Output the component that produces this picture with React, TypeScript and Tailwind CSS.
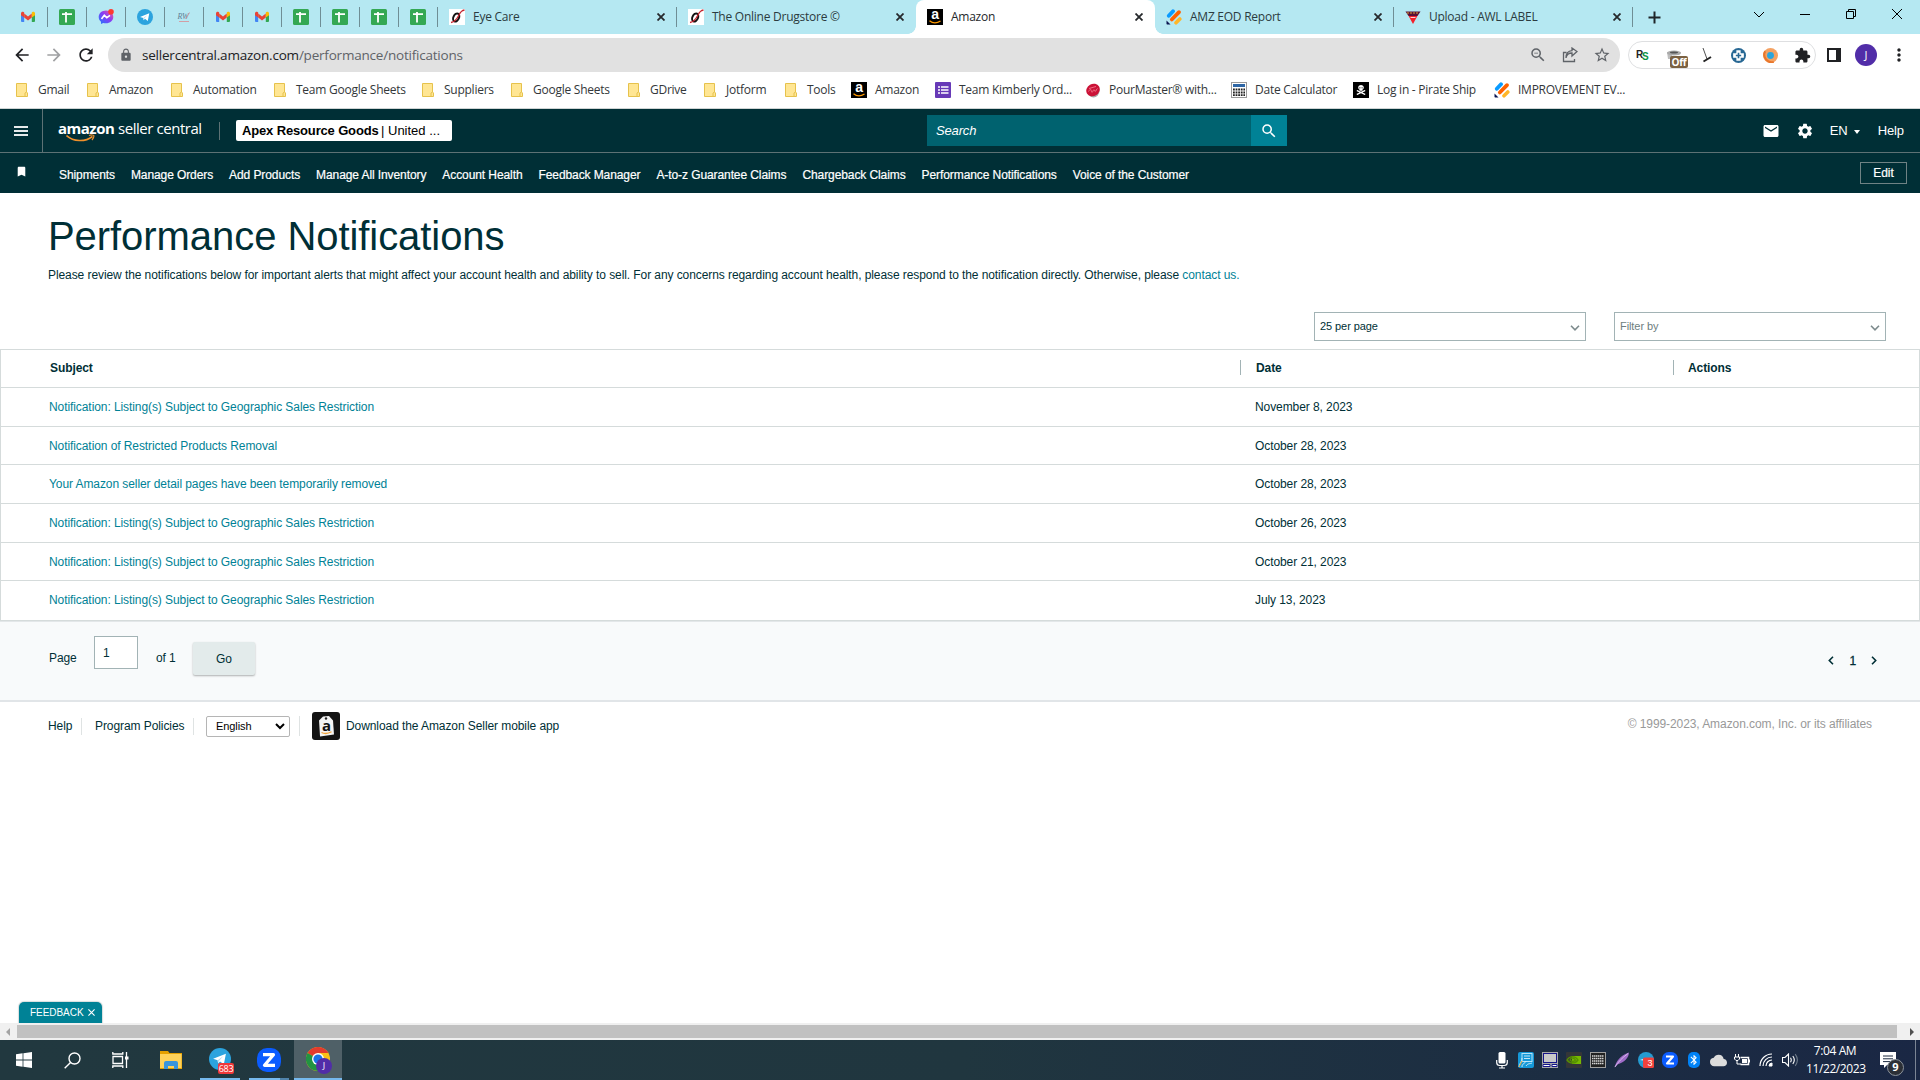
import type { ReactNode } from "react";
import { FaSkullCrossbones } from "react-icons/fa";
import {
  MdArrowBack,
  MdArrowForward,
  MdBluetooth,
  MdBookmark,
  MdCloud,
  MdEmail,
  MdExtension,
  MdLock,
  MdMoreVert,
  MdRefresh,
  MdSearch,
  MdSettings,
  MdStarBorder,
  MdZoomOut,
} from "react-icons/md";

const GmailIcon = () => (
  <svg width="16" height="16" viewBox="0 0 16 16">
    <path d="M1 4.5V12a1 1 0 0 0 1 1h2.2V6.6z" fill="#4285f4" />
    <path d="M15 4.5V12a1 1 0 0 1-1 1h-2.2V6.6z" fill="#34a853" />
    <path d="M4.2 4.6 8 7.5l3.8-2.9v4L8 11.4 4.2 8.6z" fill="#ea4335" />
    <path d="M1 4.4C1 2.8 2.6 2.4 3.6 3.1l.6.5v5L1 6.2z" fill="#ea4335" />
    <path d="M15 4.4c0-1.6-1.6-2-2.6-1.3l-.6.5v5L15 6.2z" fill="#fbbc04" />
  </svg>
);

const SheetsIcon = () => (
  <svg width="16" height="16" viewBox="0 0 16 16">
    <rect width="16" height="16" rx="1.5" fill="#34a853" />
    <path d="M3 5.2h10M7 3v10.5" stroke="#fff" strokeWidth="1.8" fill="none" />
  </svg>
);

const MessengerIcon = () => (
  <svg width="16" height="16" viewBox="0 0 16 16">
    <defs>
      <linearGradient id="msg" x1="0" y1="1" x2="1" y2="0">
        <stop offset="0" stopColor="#1a7bff" />
        <stop offset="0.55" stopColor="#8a3cf5" />
        <stop offset="1" stopColor="#ff5f8a" />
      </linearGradient>
    </defs>
    <path d="M8 1.5C4 1.5.7 4.3.7 8c0 2 .9 3.6 2.3 4.8V15l2.2-1.1c.9.2 1.8.4 2.8.4 4 0 7.3-2.7 7.3-6.3S12 1.5 8 1.5z" fill="url(#msg)" />
    <path d="M3.5 10 6.3 6.3 8.8 8.6 12 6.3" stroke="#fff" strokeWidth="1.6" fill="none" />
    <circle cx="13" cy="2.8" r="2.8" fill="#ff3b30" />
  </svg>
);

const TelegramIcon = ({ size = 16 }: { size?: number }) => (
  <svg width={size} height={size} viewBox="0 0 16 16">
    <circle cx="8" cy="8" r="8" fill="#2ca3de" />
    <path d="M3 7.9 12.3 4.2 10.8 11.9 8 9.8 6.6 11.2 6.3 8.900z" fill="#fff" />
    <path d="M6.3 8.9 10.5 5.9 7.2 9.4 6.6 11.2z" fill="#b5d9ee" />
  </svg>
);

const RwIcon = () => (
  <svg width="16" height="16" viewBox="0 0 16 16">
    <text x="1.5" y="10" fontSize="8" fontStyle="italic" fontFamily="Liberation Serif" fill="#5f7f96">RW</text>
    <path d="M9.500 10 13.500 3.500M3 12.500h10" stroke="#d98a90" strokeWidth=".8" />
  </svg>
);

const DrugstoreIcon = () => (
  <svg width="16" height="16" viewBox="0 0 16 16">
    <rect width="16" height="16" fill="#fff" />
    <ellipse cx="7.2" cy="8.5" rx="2.800" ry="4.200" transform="rotate(25 7.2 8.5)" stroke="#111" strokeWidth="2" fill="none" />
    <path d="M2 13.5C5 13 8 10 10 6s3-4.500 5.5-5" stroke="#c4252f" strokeWidth="1.3" fill="none" />
  </svg>
);

const AmazonIcon = () => (
  <svg className="overflow-visible" width="16" height="16" viewBox="0 0 16 16">
    <rect width="16" height="16" fill="#000" />
    <text x="8" y="10.3" fontSize="14" fontWeight="bold" fontFamily="Liberation Sans" textAnchor="middle" fill="#fff">a</text>
    <path d="M2.5 11.8c3 2.4 7.5 2.5 11 .2" stroke="#f90" strokeWidth="1.3" fill="none" />
  </svg>
);

const JotformIcon = () => (
  <svg width="16" height="16" viewBox="0 0 16 16" strokeLinecap="round">
    <path d="M2.8 6.8 7 2.2" stroke="#0a9bff" strokeWidth="3.8" />
    <path d="M5.8 10.5 13 3.2" stroke="#ff6100" strokeWidth="3.8" />
    <path d="M10 13.8 13.8 10" stroke="#ffb629" strokeWidth="3.6" />
    <path d="M.5 11.5v3.3q0 .7.7.7h3.3z" fill="#0a1551" />
  </svg>
);

const UploadIcon = () => (
  <svg width="16" height="16" viewBox="0 0 16 16">
    <path d="M.5 2.5h15L12.500 7h-9z" fill="#5a1038" />
    <path d="M2 4h12" stroke="#d8a530" strokeWidth="1" strokeDasharray="2 1" />
    <path d="M3.6 7h8.8L8 15z" fill="#f3202a" />
    <path d="M5.5 8.5h5" stroke="#fff" strokeWidth=".8" />
  </svg>
);

const FolderIcon = () => (
  <svg width="12" height="16" viewBox="0 0 12 16">
    <path d="M.5 1.5h10V10l1 1v3.5H.5z" fill="#ffe694" stroke="#e6c24c" />
    <path d="M9 14.5V11l1.5-1" fill="none" stroke="#e6c24c" />
  </svg>
);

const FormsIcon = () => (
  <svg width="16" height="16" viewBox="0 0 16 16">
    <rect width="16" height="16" rx="1" fill="#673ab7" />
    <path d="M3 5h2M3 8h2M3 11h2M6 5h7.5M6 8h7.5M6 11h7.5" stroke="#fff" strokeWidth="1.5" />
  </svg>
);

const PourIcon = () => (
  <svg width="16" height="16" viewBox="0 0 16 16">
    <ellipse cx="8.500" cy="9" rx="6" ry="6.500" fill="#a8a8a8" />
    <ellipse cx="8" cy="8" rx="7" ry="6" transform="rotate(-30 8 8)" fill="#cb1237" />
    <path d="M3.5 9.5c2-3 2-3 3 0s2-4 3-1 2-2 3-2M4 6.5l7-2" stroke="#f0788c" strokeWidth=".9" fill="none" />
  </svg>
);

const DateCalcIcon = () => (
  <svg width="16" height="16" viewBox="0 0 16 16">
    <rect x=".5" y=".5" width="15" height="15" fill="#fff" stroke="#9a9a9a" />
    <path d="M2 3.5h12" stroke="#2e66a5" strokeWidth="3" />
    <path d="M2 7.5h12M2 10.5h12M2 13.2h12" stroke="#222" strokeWidth="1.8" strokeDasharray="1.8 .8" />
  </svg>
);

const PirateIcon = () => (
  <div className="flex size-4 items-center justify-center bg-black">
    <FaSkullCrossbones size={10} color="#fff" />
  </div>
);

const pinned = [
  <GmailIcon />, <SheetsIcon />, <MessengerIcon />, <TelegramIcon />, <RwIcon />, <GmailIcon />,
  <GmailIcon />, <SheetsIcon />, <SheetsIcon />, <SheetsIcon />, <SheetsIcon />,
];

const tabs = [
  { icon: <DrugstoreIcon />, title: "Eye Care", line: true },
  { icon: <DrugstoreIcon />, title: "The Online Drugstore ©" },
  { icon: <AmazonIcon />, title: "Amazon", active: true },
  { icon: <JotformIcon />, title: "AMZ EOD Report", line: true },
  { icon: <UploadIcon />, title: "Upload - AWL LABEL", line: true },
];

const bookmarks = [
  { title: "Gmail", width: 71 },
  { title: "Amazon", width: 84 },
  { title: "Automation", width: 103 },
  { title: "Team Google Sheets", width: 148 },
  { title: "Suppliers", width: 89 },
  { title: "Google Sheets", width: 117 },
  { title: "GDrive", width: 76 },
  { title: "Jotform", width: 81 },
  { title: "Tools", width: 66 },
  { title: "Amazon", width: 84, icon: <AmazonIcon /> },
  { title: "Team Kimberly Ord...", width: 150, icon: <FormsIcon /> },
  { title: "PourMaster® with...", width: 146, icon: <PourIcon /> },
  { title: "Date Calculator", width: 122, icon: <DateCalcIcon /> },
  { title: "Log in - Pirate Ship", width: 141, icon: <PirateIcon /> },
  { title: "IMPROVEMENT EV...", width: 140, icon: <JotformIcon /> },
];

const navLinks = [
  "Shipments", "Manage Orders", "Add Products", "Manage All Inventory", "Account Health", "Feedback Manager",
  "A-to-z Guarantee Claims", "Chargeback Claims", "Performance Notifications", "Voice of the Customer",
];

const rows = [
  { subject: "Notification: Listing(s) Subject to Geographic Sales Restriction", date: "November 8, 2023" },
  { subject: "Notification of Restricted Products Removal", date: "October 28, 2023" },
  { subject: "Your Amazon seller detail pages have been temporarily removed", date: "October 28, 2023" },
  { subject: "Notification: Listing(s) Subject to Geographic Sales Restriction", date: "October 26, 2023" },
  { subject: "Notification: Listing(s) Subject to Geographic Sales Restriction", date: "October 21, 2023" },
  { subject: "Notification: Listing(s) Subject to Geographic Sales Restriction", date: "July 13, 2023" },
];

const Cross = ({ size = 8, width = 1.8 }: { size?: number; width?: number }) => (
  <svg width={size} height={size} viewBox="0 0 8 8" stroke="currentColor" strokeWidth={width}>
    <path d="M.5.5l7 7M7.5.5l-7 7" />
  </svg>
);

const TabBar = () => (
  <div className="flex h-[34px] bg-[#b5e8f2] pl-[9px] text-[12px] tracking-[-0.25px] text-[#2b3b40]">
    {pinned.map((icon, i) => (
      <div key={i} className="flex w-[39px] items-center">
        <div className="flex w-[38px] justify-center">{icon}</div>
        <div className="h-5 w-px bg-[#6f8e95]" />
      </div>
    ))}
    {tabs.map((tab) => (
      <div
        key={tab.title}
        className={tab.active ? "relative flex w-[239px] items-center rounded-t-lg bg-white text-[#26292c]" : "flex w-[239px] items-center"}
      >
        {tab.active && (
          <>
            <div className="absolute bottom-0 -left-2 size-2 bg-[radial-gradient(circle_at_0_0,#b5e8f2_7.5px,#fff_8px)]" />
            <div className="absolute -right-2 bottom-0 size-2 bg-[radial-gradient(circle_at_100%_0,#b5e8f2_7.5px,#fff_8px)]" />
          </>
        )}
        <div className="ml-[11px] flex w-6">{tab.icon}</div>
        <span className="flex-1 whitespace-nowrap">{tab.title}</span>
        <div className="mr-[11px] text-[#26292c]">
          <Cross />
        </div>
        <div className={tab.line ? "h-5 w-px bg-[#6f8e95]" : "h-5 w-px"} />
      </div>
    ))}
    <svg className="mt-[11px] ml-[15px]" width="13" height="13" viewBox="0 0 13 13" stroke="#1f2528" strokeWidth="2">
      <path d="M6.5.5v12M.5 6.5h12" />
    </svg>
    <svg className="mt-2 ml-[92px]" width="150" height="12" viewBox="0 0 150 12" stroke="#000" fill="none">
      <path d="M1 4l5 5 5-5" />
      <path d="M47 6.5h10" />
      <path d="M93.5 3.5h7v7h-7zM95.5 3.500v-2h7v7h-2" />
      <path d="M139 1l10 10M149 1l-10 10" />
    </svg>
  </div>
);

const Toolbar = () => (
  <div className="flex h-[42px] items-center text-[#202124]">
    <div className="flex w-[108px] items-center gap-3 pl-[12px]">
      <MdArrowBack size={20} />
      <MdArrowForward size={20} color="#a0a1a3" />
      <MdRefresh size={20} />
    </div>
    <div className="flex h-[34px] w-[1512px] items-center rounded-full bg-[#e1e1e1] text-[#5f6368]">
      <MdLock size={14} className="ml-[11px]" />
      <div className="ml-[9px] flex-1 text-[13.5px] tracking-[-0.21px]">
        <span className="text-[#202124]">sellercentral.amazon.com</span>/performance/notifications
      </div>
      <MdZoomOut size={18} />
      <svg className="ml-[15px]" width="16" height="16" viewBox="0 0 16 16" stroke="#5f6368" strokeWidth="1.3" fill="none">
        <path d="M4.5 5.5H1.500v9h11V12M4 11c.6-3.5 3-5 6-5V9l5-4.500L10 1v2.7C6 4 4 7 4 11z" />
      </svg>
      <MdStarBorder size={18} className="mr-[9px] ml-[15px]" />
    </div>
    <div className="ml-2 flex h-7 w-[188px] items-center rounded-full border border-[#dedfe1]">
      <svg className="ml-[7px]" width="14" height="16" viewBox="0 0 14 16" fontFamily="Liberation Sans" fontWeight="bold">
        <text x="0" y="11" fontSize="10" fill="#222">R</text>
        <text x="6" y="13" fontSize="10" fill="#0a9345">S</text>
      </svg>
      <div className="relative ml-4 size-4">
        <svg width="16" height="16" viewBox="0 0 16 16">
          <path d="M1 5h14l-2 3H6v4H2z" fill="#bdbdbd" />
          <ellipse cx="8" cy="6" rx="7" ry="2.5" fill="#aaa" />
          <ellipse cx="8" cy="5.500" rx="4" ry="1" fill="#555" />
        </svg>
        <div className="absolute top-[9px] left-1 h-3 w-[18px] rounded-[2px] bg-[#7b6142] text-center text-[10px] leading-[12px] font-bold tracking-[-0.3px] text-white">Off</div>
      </div>
      <svg className="ml-[18px]" width="14" height="16" viewBox="0 0 14 16" stroke="#222" fill="none">
        <path d="M3 1 7 12" strokeWidth=".8" />
        <path d="M3.500 14.5 11 10" strokeWidth="2" />
      </svg>
      <svg className="ml-[17px]" width="15" height="15" viewBox="0 0 14 14">
        <circle cx="7" cy="7" r="7" fill="#286894" />
        <path d="M7 2v10M2 7h10" stroke="#fff" strokeWidth="4" />
        <path d="M7 4.5v5M4.5 7h5" stroke="#286894" strokeWidth="1.500" />
      </svg>
      <svg className="ml-[17px]" width="15" height="15" viewBox="0 0 14 14">
        <circle cx="7" cy="7" r="7" fill="#f4a263" />
        <path d="M2 3a7 7 0 0 0 8 10" stroke="#e9772c" strokeWidth="2" fill="none" />
        <circle cx="7" cy="7" r="3.2" fill="#2ba5dd" />
      </svg>
      <MdExtension size={17} className="ml-4" />
    </div>
    <svg className="ml-[11px]" width="14" height="14" viewBox="0 0 14 14">
      <path d="M1 1h12v12H1z" fill="#fff" stroke="#202124" strokeWidth="2" />
      <path d="M9 0h5v14H9z" fill="#202124" />
    </svg>
    <div className="ml-[14px] flex size-[22px] items-center justify-center rounded-full bg-[#512da8] text-[11px] text-white">J</div>
    <MdMoreVert size={20} className="ml-3" />
  </div>
);

const Bookmarks = () => (
  <div className="flex h-[33px] items-center border-b border-[#cfd4d4] pb-1 pl-4 text-[12px] tracking-[-0.25px] text-[#33373a]">
    {bookmarks.map((b, i) => (
      <div key={i} className="flex items-center whitespace-nowrap" style={{ width: b.width }}>
        <div className={b.icon ? "w-6 shrink-0" : "w-[22px] shrink-0"}>{b.icon ?? <FolderIcon />}</div>
        {b.title}
      </div>
    ))}
  </div>
);

const Header = () => (
  <div className="bg-[#002f36] font-['Liberation_Sans',sans-serif] text-white">
    <div className="flex h-[44px] border-b border-[#5d7275]">
      <div className="flex w-[43px] items-center border-r border-[#5d7275] pl-[14px]">
        <svg width="14" height="10" viewBox="0 0 14 10" stroke="#e6eaeb" strokeWidth="1.8">
          <path d="M0 1h14M0 5h14M0 9h14" />
        </svg>
      </div>
      <div className="relative ml-[15px] flex h-[38px] w-[161px] items-center font-['Open_Sans',sans-serif] text-[15px] whitespace-nowrap">
        <span className="w-[60px] font-bold tracking-[-0.5px]">amazon</span>
        <span className="tracking-[-0.45px]">seller central</span>
        <svg className="absolute top-[25px] left-2" width="30" height="9" viewBox="0 0 30 9" stroke="#f0902b" fill="none">
          <path d="M.5 1.5c7 6 18 7 26 1" strokeWidth="1.6" />
          <path d="M23 1.5c2-.8 5-.7 5 .3s-1 3-2 4.2" strokeWidth="1.2" />
        </svg>
      </div>
      <div className="mt-[13px] h-[18px] w-px bg-[#5d7275]" />
      <div className="mt-[11px] ml-4 flex h-[21px] w-[216px] items-center rounded-[2px] bg-white pl-1.5 text-[13px] text-black">
        <span className="w-[139px] font-bold tracking-[-0.15px] whitespace-nowrap">Apex Resource Goods</span>| United ...
      </div>
      <div className="mt-1.5 ml-[475px] flex h-[31px] w-[360px]">
        <div className="flex w-[324px] items-center bg-[#00626f] pl-[9px] text-[13px] tracking-[-0.15px] italic">Search</div>
        <div className="flex w-9 items-center justify-center bg-[#008296]">
          <MdSearch size={18} />
        </div>
      </div>
      <div className="ml-auto flex items-center pr-4 text-[13px] tracking-[-0.1px]">
        <MdEmail size={18} />
        <MdSettings size={18} className="ml-4" />
        <span className="ml-4">EN</span>
        <span className="mt-0.5 ml-1.5 border-x-[3.5px] border-t-4 border-x-transparent border-t-white" />
        <span className="ml-[18px]">Help</span>
      </div>
    </div>
    <div className="flex h-[40px] items-center text-[12px]">
      <MdBookmark size={13} className="mb-1 ml-[15px] w-[13px]" />
      <div className="mt-[3px] ml-[31px] flex gap-4 tracking-[-0.09px] [-webkit-text-stroke:0.2px_white]">
        {navLinks.map((link) => (
          <span key={link} className="whitespace-nowrap">{link}</span>
        ))}
      </div>
      <div className="mr-[13px] ml-auto flex h-[22px] w-[47px] items-center justify-center border border-[#6f8284] [-webkit-text-stroke:0.2px_white]">Edit</div>
    </div>
  </div>
);

const Select = ({ children, className }: { children: ReactNode; className: string }) => (
  <div className={`flex h-[29px] w-[272px] items-center justify-between border border-[#a2b3b5] bg-white pr-[5px] pl-[5px] text-[11px] tracking-[-0.08px] ${className}`}>
    {children}
    <svg className="mt-0.5" width="10" height="6" viewBox="0 0 10 6" stroke="#7d8b8d" strokeWidth="1.6" fill="none">
      <path d="M1 .8l4 4 4-4" />
    </svg>
  </div>
);

const Content = () => (
  <div className="flex h-[830px] flex-col font-['Liberation_Sans',sans-serif] text-[12px] tracking-[-0.08px] text-[#002f36]">
    <div className="h-[119px] pl-12">
      <h1 className="pt-[20px] text-[40px] leading-[46px] tracking-[-0.06px]">Performance Notifications</h1>
      <p className="mt-2 leading-4">
        Please review the notifications below for important alerts that might affect your account health and ability to
        sell. For any concerns regarding account health, please respond to the notification directly. Otherwise, please{" "}
        <span className="text-[#008296]">contact us.</span>
      </p>
    </div>
    <div className="flex h-[37px] justify-end gap-7 pr-[34px]">
      <Select className="text-[#002f36]">25 per page</Select>
      <Select className="text-[#6d7e80]">Filter by</Select>
    </div>
    <div className="border border-[#d5dbdb]">
      <div className="flex h-[38px] items-center border-b border-[#d5dbdb] pb-0.5 pl-[49px] font-bold">
        <span className="w-[1190px]">Subject</span>
        <span className="h-[15px] w-4 border-l border-[#a2b3b5]" />
        <span className="w-[417px]">Date</span>
        <span className="h-[15px] w-[15px] border-l border-[#a2b3b5]" />
        <span>Actions</span>
      </div>
      {rows.map((row, i) => (
        <div key={i} className="flex h-[38.7px] items-center border-b border-[#d5dbdb] pl-12 last:border-b-0 last:pb-0.5">
          <span className="w-[1206px] text-[#008296]">{row.subject}</span>
          <span>{row.date}</span>
        </div>
      ))}
    </div>
    <div className="flex h-[81px] justify-between border-t border-b-2 border-t-[#e3e7e9] border-b-[#e1e5e8] bg-[#f8fafb]">
      <div className="flex pl-[49px]">
        <span className="mt-[27px] w-[45px]">Page</span>
        <div className="mt-[14px] flex h-[33px] w-11 items-center border border-[#a2b3b5] bg-white pl-2">1</div>
        <span className="mt-[27px] ml-[18px] w-9">of 1</span>
        <div className="mt-[20px] ml-px flex h-[33px] w-[62px] items-center justify-center rounded-[2px] bg-[#e3ebeb] shadow-[0_1px_2px_rgba(0,0,0,0.3)]">Go</div>
      </div>
      <div className="flex h-[77px] items-center gap-[15px] pr-[43px] text-[12px]">
        <svg width="6" height="9" viewBox="0 0 6 9" stroke="#002f36" strokeWidth="1.6" fill="none">
          <path d="M5 .8 1.3 4.5 5 8.2" />
        </svg>
        <span className="[-webkit-text-stroke:0.3px_#002f36]">1</span>
        <svg width="6" height="9" viewBox="0 0 6 9" stroke="#002f36" strokeWidth="1.6" fill="none">
          <path d="M1 .8 4.7 4.5 1 8.2" />
        </svg>
      </div>
    </div>
    <div className="flex h-[48px] items-center pl-12">
      <span className="w-[33px]">Help</span>
      <span className="h-[17px] w-[14px] border-l border-[#dfe3e3]" />
      <span className="w-[98px]">Program Policies</span>
      <span className="h-[17px] w-[13px] border-l border-[#dfe3e3]" />
      <div className="flex h-[21px] w-[84px] items-center justify-between rounded-[2px] border border-[#b5b5b5] pr-1 pl-[9px] text-[11px] text-black">
        English
        <svg width="10" height="7" viewBox="0 0 10 7" stroke="#000" strokeWidth="2" fill="none">
          <path d="M1 1l4 4 4-4" />
        </svg>
      </div>
      <span className="ml-[9px] h-[20px] w-[13px] border-l border-[#dfe3e3]" />
      <svg width="28" height="28" viewBox="0 0 28 28">
        <rect width="28" height="28" rx="3" fill="#131313" />
        <path d="M11 4.5 17 4l4 4.5 1 14L8 24.5 7 8.500z" fill="#f4f4f4" />
        <circle cx="14" cy="6.5" r="1.2" fill="#222" />
        <text x="14.5" y="19" fontSize="15" fontWeight="bold" textAnchor="middle" fontFamily="Open Sans" fill="#111">a</text>
        <path d="M9.5 20.5c3 1.5 7 1 10-.7" stroke="#f2a33a" strokeWidth="1.3" fill="none" />
      </svg>
      <span className="ml-1.5">Download the Amazon Seller mobile app</span>
      <span className="mb-1 mr-12 ml-auto text-[#999]">© 1999-2023, Amazon.com, Inc. or its affiliates</span>
    </div>
    <div className="mt-auto ml-[19px] flex h-[21px] w-[83px] items-center rounded-t-[5px] bg-[#008296] pl-[11px] text-[10px] text-white shadow-[0_0_1px_1px_#d8dede]">
      <span className="w-[58px] tracking-[-0.05px]">FEEDBACK</span>
      <Cross size={7} width={1.3} />
    </div>
  </div>
);

const ScrollBar = () => (
  <div className="z-10 flex h-[17px] items-center bg-[#f0f0f0]">
    <div className="flex w-[17px] pl-1.5">
      <div className="border-y-4 border-r-4 border-y-transparent border-r-[#a3a3a3]" />
    </div>
    <div className="h-[13px] w-[1880px] bg-[#c1c1c1]" />
    <div className="ml-auto mr-1.5 border-y-4 border-l-4 border-y-transparent border-l-[#505050]" />
  </div>
);

const ZoomIcon = ({ size }: { size: number }) => (
  <svg width={size} height={size} viewBox="0 0 24 24">
    <rect width="24" height="24" rx="10" fill="#0b5cff" />
    <path d="M6 6.7h10.500L7.5 17.3H18" stroke="#fff" strokeWidth="3.200" fill="none" strokeLinejoin="round" />
  </svg>
);

const trayIcons = [
  <svg width="12" height="17" viewBox="0 0 12 17">
    <rect x="2.500" width="7" height="11.5" rx="1.5" fill="#fff" />
    <path d="M.7 8v2.5q0 3 3 3h4.6q3 0 3-3V8M6 13.5V16M3 16h6" stroke="#fff" strokeWidth="1.2" fill="none" />
  </svg>,
  <svg width="16" height="16" viewBox="0 0 16 16">
    <rect width="16" height="16" rx="2" fill="#1598d8" />
    <rect x="4" y="1.5" width="10" height="8" fill="none" stroke="#b8e2f5" />
    <path d="M6 4h6M6 6.5h6M1 15c1-5 3-5 3-9M4 15c0-4 3-3 4-6M8 14c2-3 4-2 6-3" stroke="#d7eef8" strokeWidth=".9" fill="none" />
    <path d="M1 15l3-6" stroke="#e2a33c" />
  </svg>,
  <svg width="16" height="16" viewBox="0 0 16 16">
    <rect width="16" height="16" fill="#a9a9a9" />
    <rect x="1.5" y="1.5" width="13" height="9" fill="#c9c9c9" stroke="#16168a" />
    <path d="M1 12.5h7v2H1zM10 12.5h5v2h-5z" fill="#fff" stroke="#16168a" />
  </svg>,
  <svg width="16" height="16" viewBox="0 0 16 16">
    <rect width="16" height="16" rx="1" fill="#343638" />
    <path d="M6 4h9v8H6z" fill="#76b900" />
    <path d="M1 8c3-4.5 8-4.5 11 0-3 4-8 4-11 0zM4 8c1-2.5 4-2.5 5.5 0C8 10 5.5 10 4 8z" stroke="#579000" strokeWidth="1.3" fill="none" />
  </svg>,
  <svg width="16" height="16" viewBox="0 0 16 16">
    <rect x=".5" y=".5" width="15" height="15" fill="#222" stroke="#a0a0a0" />
    <path d="M2 4h12M2 6.5h12M2 9h12M2 11.5h12" stroke="#d5d5d5" strokeWidth="1.4" strokeDasharray="1.5 .5" />
  </svg>,
  <svg width="16" height="16" viewBox="0 0 16 16">
    <path d="M.5 15.5C2 10 6 3 15 .5c0 5-5 10-11.5 12z" fill="#a06cc9" />
    <path d="M1 15C4 10 8 6 14 1.5" stroke="#e4cdf2" strokeWidth=".8" fill="none" />
  </svg>,
  <svg width="16" height="16" viewBox="0 0 16 16">
    <circle cx="8" cy="8" r="8" fill="#259bd1" />
    <path d="M2 8l7-2v3z" fill="#fff" />
    <rect x="5" y="5.5" width="11" height="10.5" rx="1.5" fill="#f0413c" />
    <text x="12" y="14" fontSize="9" textAnchor="middle" fill="#fff" fontFamily="Liberation Sans">3</text>
  </svg>,
  <ZoomIcon size={16} />,
  <div className="flex h-4 w-3 items-center justify-center rounded-[5px] bg-[#0082f6] text-white">
    <MdBluetooth size={14} />
  </div>,
  <MdCloud size={17} color="#dcdcdc" />,
  <svg width="16" height="12" viewBox="0 0 16 12" stroke="#fff" fill="none">
    <path d="M6.5 3.5h8v7h-8M15.5 5.5v3" strokeWidth="1.5" />
    <path d="M8 5h5v4H8z" fill="#fff" stroke="none" />
    <path d="M1.5 0v3M4.5 0v3M.5 3h5v2L4 6.5H2L.5 5zM3 6.5V10h4" />
  </svg>,
  <svg width="14" height="14" viewBox="0 0 14 14" stroke="#fff" fill="none">
    <path d="M1 13A12 12 0 0 1 13 1M4 13a9 9 0 0 1 9-9M7 13a6 6 0 0 1 6-6" strokeWidth="1.2" />
    <path d="M10 13a3 3 0 0 1 3-3v3z" fill="#fff" />
  </svg>,
  <svg width="16" height="14" viewBox="0 0 16 14" stroke="#fff" fill="none" strokeWidth="1.1">
    <path d="M.5 4.5h2.500L6.5 1v12L3 9.5H.5zM8.5 4.8q1.5 2.2 0 4.4M10.8 3q3 4 0 8" />
    <path d="M13.2 1.2q4.4 5.8 0 11.600" stroke="#6f7c8a" />
  </svg>,
];

const Taskbar = () => (
  <div className="flex h-10 bg-linear-to-r from-[#21383f] via-[#20363f] to-[#1a2744] text-white">
    <div className="flex w-12 items-center justify-center">
      <svg width="16" height="16" viewBox="0 0 16 16" fill="#fff">
        <path d="M0 2.2 6.6 1.3v6.3H0zM7.4 1.2 16 0v7.6H7.4zM0 8.4h6.6v6.3L0 13.8zM7.4 8.4H16V16l-8.6-1.2z" />
      </svg>
    </div>
    <div className="flex w-12 items-center justify-center">
      <svg width="17" height="17" viewBox="0 0 17 17" stroke="#fff" strokeWidth="1.4" fill="none">
        <circle cx="10.5" cy="6.5" r="5.5" />
        <path d="M6.5 10.5.7 16.3" />
      </svg>
    </div>
    <div className="flex w-12 items-center justify-center">
      <svg width="17" height="16" viewBox="0 0 17 16" stroke="#fff" strokeWidth="1.3" fill="none">
        <path d="M1 4.5h9.5v7H1zM.8 0v2h10V0M.8 16v-2h10v2M14.5 0v16" />
        <path d="M13 4.5h3.5v3H13z" fill="#fff" stroke="none" />
      </svg>
    </div>
    <div className="flex w-[56px] items-center pl-4">
      <svg width="22" height="18" viewBox="0 0 22 18">
        <path d="M0 0h8l1.5 2H22v16H0z" fill="#e5a000" />
        <path d="M0 3h21.500v14H0z" fill="#ffd25a" />
        <path d="M4 18v-6q0-2 2-2h10q2 0 2 2v6h-4v-3H8v3z" fill="#3a95dc" />
      </svg>
    </div>
    <div className="relative flex w-10 items-center justify-center border-b-2 border-[#76b9ed]">
      <TelegramIcon size={22} />
      <div className="absolute top-[23px] left-[18px] h-[11px] w-4 rounded-[2px] bg-[#f0393a] text-center text-[9px] leading-[11px] tracking-[-0.3px]">683</div>
    </div>
    <div className="ml-[9px] flex w-[45px] flex-col">
      <div className="flex h-[38px] items-center pt-0.5 pl-2">
        <ZoomIcon size={24} />
      </div>
      <div className="flex h-0.5">
        <div className="w-[31px] bg-[#76b9ed]" />
        <div className="w-[9px] bg-[#5084ab]" />
      </div>
    </div>
    <div className="relative flex w-12 items-center justify-center border-b-2 border-[#76b9ed] bg-[#4f6067]">
      <svg width="24" height="24" viewBox="0 0 24 24">
        <circle cx="12" cy="12" r="12" fill="#fbc116" />
        <path d="M12 12 1.6 6A12 12 0 0 1 22.4 6L12 6z" fill="#e33b2e" />
        <path d="M12 12 1.6 6A12 12 0 0 0 12 24l5-9z" fill="#229342" />
        <circle cx="12" cy="12" r="6" fill="#fff" />
        <circle cx="12" cy="12" r="4.6" fill="#1a73e8" />
      </svg>
      <div className="absolute top-[18px] left-[22px] flex size-4 items-center justify-center rounded-full bg-[#512da8] text-[9px]">J</div>
    </div>
    <div className="ml-auto flex items-center">
      {trayIcons.map((icon, i) => (
        <div key={i} className="flex w-6 justify-center">{icon}</div>
      ))}
    </div>
    <div className="mr-4 ml-1 w-[58px] pt-[2px] text-center text-[12px] leading-[18px] tracking-[-0.4px] whitespace-nowrap">
      <div>7:04 AM</div>
      <div>11/22/2023</div>
    </div>
    <div className="relative w-[35px] pt-3">
      <svg width="16" height="16" viewBox="0 0 16 16">
        <path d="M0 0h16v13H7l-3 3v-3H0z" fill="#fff" />
        <path d="M3 4h10M3 6.8h10M3 9.6h7" stroke="#1c2a40" />
      </svg>
      <div className="absolute top-[19px] left-[7px] flex size-[17px] items-center justify-center rounded-full border border-[#8c939c] bg-[#2b2f36] text-[11px] font-bold">9</div>
    </div>
    <div className="mr-1 w-px bg-[#7b8494]" />
  </div>
);

const App = () => {
  return (
    <div className="flex h-[1080px] w-[1920px] flex-col overflow-hidden bg-white font-['Open_Sans','Noto_Sans',sans-serif]">
      <TabBar />
      <Toolbar />
      <Bookmarks />
      <Header />
      <Content />
      <ScrollBar />
      <Taskbar />
    </div>
  );
};

export default App;
